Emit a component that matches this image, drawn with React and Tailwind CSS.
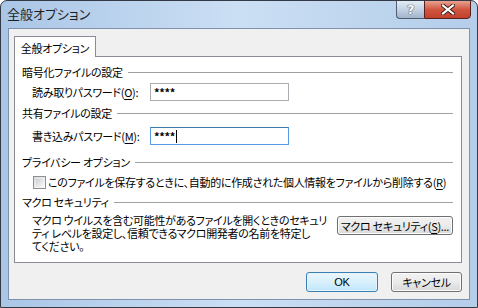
import React from "react";

function Header({ children, className = "" }) {
  return (
    <div className={"flex items-center h-[14px] pl-[7px] pr-[8px] " + className}>
      <span className="whitespace-nowrap">{children}</span>
      <div className="flex-1 h-px bg-[#a0a0a0] ml-[5px]" />
    </div>
  );
}

function U({ children }) {
  return <span className="underline underline-offset-[2px]">{children}</span>;
}

export default function App() {
  return (
    <div className="w-[478px] h-[308px] [font-family:'Noto_Sans_CJK_JP',sans-serif] [font-feature-settings:'palt'] text-[11px] tracking-[-0.3px] leading-[14px] text-black bg-white">
      <div className="w-[478px] h-[308px] rounded-t-[7px] border border-[#333a45] bg-gradient-to-r from-[#aac6e6] via-[#cbdff4] to-[#b4cde9] flex flex-col overflow-hidden">
        {/* title bar */}
        <div className="h-[27px] flex items-start shrink-0">
          <div className="pl-[6px] pt-[5px] text-[13px] tracking-normal leading-[16px] text-[#1e1e1e]">全般オプション</div>
          <div className="flex-1" />
          <div className="flex mr-[6px] -mt-px">
            <div className="w-[28px] h-[19px] rounded-bl-[4px] border border-[#4f5d70] border-r-0 bg-gradient-to-b from-[#e3ecf6] via-[#c4d3e4] to-[#a2b4ca] flex items-center justify-center">
              <span className="text-[13px] font-bold text-white [text-shadow:0_0_1px_#333,0_0_1px_#333] [font-family:'DejaVu_Sans',sans-serif] leading-none">?</span>
            </div>
            <div className="w-[47px] h-[19px] rounded-br-[4px] border border-[#5a2020] bg-gradient-to-b from-[#e7a191] via-[#d0563f] to-[#c2412b] flex items-center justify-center">
              <svg width="14" height="11" viewBox="0 0 14 11">
                <path d="M2 1.5 L12 9.5 M12 1.5 L2 9.5" stroke="#3a1a14" strokeWidth="4" strokeLinecap="square" />
                <path d="M2 1.5 L12 9.5 M12 1.5 L2 9.5" stroke="#ffffff" strokeWidth="2.2" strokeLinecap="square" />
              </svg>
            </div>
          </div>
        </div>
        {/* client */}
        <div className="mx-[7px] mb-[7px] flex-1 border border-[#7d91ad] bg-[#f0f0f0] flex flex-col">
          {/* tab */}
          <div className="ml-[5px] mt-[7px] w-[82px] h-[21px] bg-white border border-[#898c95] border-b-0 relative z-10 -mb-px flex items-center justify-center pt-[1px] whitespace-nowrap">
            全般オプション
          </div>
          {/* panel */}
          <div className="ml-[5px] w-[448px] h-[207px] bg-white border border-[#898c95] flex flex-col">
            <Header className="mt-[8px]">暗号化ファイルの設定</Header>
            <div className="flex items-center pl-[17px] mt-[4px]">
              <div className="w-[118px] shrink-0 whitespace-nowrap">読み取りパスワード(<U>O</U>):</div>
              <div className="w-[139px] h-[18px] border border-[#abadb3] border-t-[#abadb3] flex items-center pl-[3px] text-[11px] font-bold">****</div>
            </div>
            <Header className="mt-[5px]">共有ファイルの設定</Header>
            <div className="flex items-center pl-[17px] mt-[7px]">
              <div className="w-[118px] shrink-0 whitespace-nowrap">書き込みパスワード(<U>M</U>):</div>
              <div className="w-[139px] h-[18px] border border-[#569de5] border-t-[#3d7bad] flex items-center pl-[3px] text-[11px] font-bold">
                ****<span className="inline-block w-px h-[13px] bg-black ml-[1px]" />
              </div>
            </div>
            <Header className="mt-[10px]">プライバシー オプション</Header>
            <div className="flex items-center pl-[18px] mt-[6px] h-[14px]">
              <div className="shrink-0 w-[13px] h-[13px] border border-[#8e8f8f] bg-gradient-to-br from-[#dcdcdc] to-[#fbfbfb] p-[2px]">
                <div className="w-full h-full bg-gradient-to-br from-[#cbcfd5] to-[#f6f6f6]" />
              </div>
              <div className="ml-[2px] whitespace-nowrap">このファイルを保存するときに、自動的に作成された個人情報をファイルから削除する(<U>R</U>)</div>
            </div>
            <Header className="mt-[6px]">マクロ セキュリティ</Header>
            <div className="flex items-start pl-[17px] mt-[5px]">
              <div className="w-[300px] shrink-0 whitespace-nowrap flex flex-col">
                <div className="h-[13px] leading-[13px]">マクロ ウイルスを含む可能性があるファイルを開くときのセキュリ</div>
                <div className="h-[13px] leading-[13px]">ティ レベルを設定し、信頼できるマクロ開発者の名前を特定し</div>
                <div className="h-[13px] leading-[13px]">てください。</div>
              </div>
              <div className="ml-[5px] mt-[2px] w-[116px] shrink-0 h-[19px] rounded-[3px] border border-[#707070] bg-gradient-to-b from-[#f2f2f2] via-[#ebebeb] to-[#d8d8d8] flex items-center justify-center shadow-[inset_0_0_0_1px_#fcfcfc] whitespace-nowrap">
                マクロ セキュリティ(<U>S</U>)...
              </div>
            </div>
          </div>
          {/* buttons */}
          <div className="flex justify-end mt-[9px] mr-[7px] gap-[13px]">
            <div className="w-[72px] h-[20px] rounded-[3px] border border-[#3c7fb1] bg-gradient-to-b from-[#eaf6fd] via-[#d9f0fc] to-[#bee6fd] shadow-[inset_0_0_0_1px_#e3f4fc] flex items-center justify-center [font-family:'Liberation_Sans',sans-serif]">
              OK
            </div>
            <div className="w-[71px] h-[20px] rounded-[3px] border border-[#707070] bg-gradient-to-b from-[#f2f2f2] via-[#ebebeb] to-[#d8d8d8] shadow-[inset_0_0_0_1px_#fcfcfc] flex items-center justify-center">
              キャンセル
            </div>
          </div>
        </div>
      </div>
    </div>
  );
}
